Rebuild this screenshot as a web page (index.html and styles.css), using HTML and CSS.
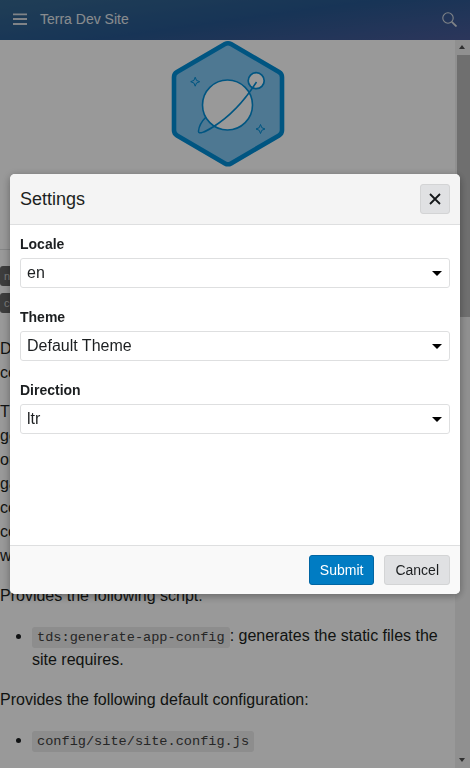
FILE: index.html
```html
<!DOCTYPE html>
<html lang="en">
<head>
    <meta charset="UTF-8">
    <title>Terra Dev Site</title>
    <link rel="stylesheet" href="styles.css">
</head>
<body>
    <header class="app-header">
        <button class="icon-button" aria-label="Menu">
            <svg width="14" height="12" viewBox="0 0 14 12"><path d="M0 1.300h14M0 6h14M0 11h14" fill="none" stroke="#d5dbe2" stroke-width="1.800"/></svg>
        </button>
        <span class="app-title">Terra Dev Site</span>
        <button class="icon-button search-button" aria-label="Search">
            <svg width="15" height="15" viewBox="0 0 15 15" fill="none" stroke="#d5dbe2"><circle cx="6" cy="6" r="5.200" stroke-width="1.100"/><path d="M9.800 9.800l4.700 4.700" stroke-width="1.800"/></svg>
        </button>
    </header>

    <main class="page">
        <div class="content">
            <div class="logo-row">
                <svg class="logo" width="116" height="130" viewBox="0 0 116 130">
                    <path d="M58 3.200a6 6 0 0 1 3 .8l48 28a6 6 0 0 1 3 5.200v53a6 6 0 0 1-3 5.200l-48 28a6 6 0 0 1-6 0l-48-28a6 6 0 0 1-3-5.200v-53a6 6 0 0 1 3-5.200l48-28a6 6 0 0 1 3-.8z" fill="#82c8f4" stroke="#008ed8" stroke-width="4.600"/>
                    <g fill="none" stroke="#008ed8" stroke-width="1.500">
                        <circle cx="57.500" cy="65" r="25" fill="#fff" stroke-width="1.600"/>
                        <circle cx="86.200" cy="40.700" r="8" fill="#fff" stroke-width="1.700"/>
                        <path d="M86.500 42C75 60 59 77 43 87 35 92 28 95 28.500 91 29 86 32 81 36 77"/>
                        <path d="M25.200 37.200l1.300 3.200 3.200 1.300-3.200 1.300-1.300 3.200-1.300-3.200-3.200-1.300 3.200-1.300z" stroke-width="1"/>
                        <path d="M90.500 84.500l1.300 3.200 3.200 1.300-3.200 1.300-1.300 3.200-1.300-3.200-3.200-1.300 3.200-1.300z" stroke-width="1"/>
                    </g>
                </svg>
            </div>
            <hr class="divider">
            <div class="badges">
                <span class="badge">npm</span>
                <span class="badge">coverage</span>
            </div>
            <p class="intro">Dev site is a static site generator for Terra<br>components and documentation.</p>
            <p>The package ships a webpack plugin that<br>generates the pages the site needs,<br>out of the files found in the project,<br>gathers the examples and tests,<br>configures the navigation and the theme,<br>compiles all of that into one bundle,<br>which is then served as a static site.</p>
            <p>Provides the following script:</p>
            <ul>
                <li><code>tds:generate-app-config</code>: generates the static files the site requires.</li>
            </ul>
            <p>Provides the following default configuration:</p>
            <ul>
                <li><code>config/site/site.config.js</code></li>
            </ul>
        </div>
        <div class="scrollbar">
            <span class="scroll-arrow"></span>
            <div class="scroll-track"><div class="scroll-thumb"></div></div>
            <span class="scroll-arrow scroll-arrow-down"></span>
        </div>
    </main>

    <div class="overlay"></div>

    <section class="modal" role="dialog" aria-label="Settings">
        <div class="modal-header">
            <h1 class="modal-title">Settings</h1>
            <button class="btn close-button" aria-label="Close">
                <svg width="12" height="12" viewBox="0 0 12 12"><path d="M1 1l10 10M11 1L1 11" fill="none" stroke="#14171a" stroke-width="1.800"/></svg>
            </button>
        </div>
        <div class="modal-body">
            <div class="field">
                <div class="field-label">Locale</div>
                <div class="select"><span>en</span><i class="caret"></i></div>
            </div>
            <div class="field">
                <div class="field-label">Theme</div>
                <div class="select"><span>Default Theme</span><i class="caret"></i></div>
            </div>
            <div class="field">
                <div class="field-label">Direction</div>
                <div class="select"><span>ltr</span><i class="caret"></i></div>
            </div>
        </div>
        <div class="modal-footer">
            <button class="btn btn-primary">Submit</button>
            <button class="btn">Cancel</button>
        </div>
    </section>
</body>
</html>
```

FILE: styles.css
```css
* {
    box-sizing: border-box;
}

html,
body {
    height: 100%;
}

body {
    margin: 0;
    overflow: hidden;
    display: flex;
    flex-direction: column;
    font-family: "Liberation Sans", Arial, sans-serif;
    font-size: 16px;
    color: #1c1f21;
    background-color: #fff;
}

button {
    font-family: inherit;
}

.app-header {
    flex: none;
    height: 40px;
    display: flex;
    align-items: center;
    padding: 0 13px 2px;
    color: #e4e9ee;
    background: linear-gradient(172deg, #36688f 0%, #27588f 50%, #4a5a98 100%);
}

.icon-button {
    display: flex;
    padding: 0;
    border: none;
    background: none;
}

.app-title {
    margin-left: 13px;
    font-size: 14px;
}

.search-button {
    margin-left: auto;
}

.page {
    flex: 1;
    min-height: 0;
    display: flex;
}

.content {
    flex: 1;
    min-width: 0;
    overflow: hidden;
    line-height: 24px;
}

.logo-row {
    display: flex;
    justify-content: center;
    height: 130px;
}

.divider {
    margin: 79px 0 0;
    border: none;
    border-top: 1px solid #dedfe0;
}

.badges {
    display: flex;
    flex-direction: column;
    align-items: flex-start;
    gap: 7px;
    margin-top: 16px;
}

.badge {
    height: 20px;
    padding: 0 4px;
    border-radius: 3px;
    font-size: 11px;
    line-height: 20px;
    color: #ccc;
    background-color: #666;
}

p {
    margin: 0 0 16px;
}

.intro {
    margin-top: 24px;
    margin-bottom: 15px;
}

ul {
    margin: 0 0 16px;
    padding-left: 32px;
}

code {
    padding: 3px 5px;
    border-radius: 3px;
    font-family: "Liberation Mono", monospace;
    font-size: 13.6px;
    line-height: 1;
    color: #404040;
    background-color: #ebebeb;
}

.scrollbar {
    flex: none;
    width: 15px;
    display: flex;
    flex-direction: column;
    background-color: #f1f1f1;
}

.scroll-arrow {
    flex: none;
    height: 15px;
    position: relative;
}

.scroll-arrow::after {
    content: "";
    position: absolute;
    left: 4px;
    top: 5px;
    border-left: 3.5px solid transparent;
    border-right: 3.5px solid transparent;
    border-bottom: 4px solid #505050;
}

.scroll-arrow-down::after {
    border-bottom: none;
    border-top: 4px solid #505050;
}

.scroll-track {
    flex: 1;
    padding-left: 2px;
}

.scroll-thumb {
    height: 262px;
    background-color: #bababa;
}

.overlay {
    position: fixed;
    inset: 0;
    background-color: rgba(0, 0, 0, 0.4);
}

.modal {
    position: fixed;
    left: 10px;
    top: 174px;
    width: 450px;
    height: 420px;
    display: flex;
    flex-direction: column;
    overflow: hidden;
    border-radius: 5px;
    background-color: #fff;
    box-shadow: 0 2px 8px rgba(0, 0, 0, 0.35);
}

.modal-header {
    flex: none;
    height: 51px;
    display: flex;
    align-items: center;
    justify-content: space-between;
    padding: 0 10px;
    border-bottom: 1px solid #dedfe0;
    background-color: #f4f4f4;
}

.modal-title {
    margin: 0;
    font-size: 18px;
    font-weight: 400;
}

.modal-body {
    flex: 1;
    padding: 10px;
}

.field {
    margin-bottom: 20px;
}

.field-label {
    margin-bottom: 5px;
    font-size: 14px;
    font-weight: 700;
    line-height: 18px;
}

.select {
    height: 30px;
    display: flex;
    align-items: center;
    justify-content: space-between;
    padding: 0 6px;
    border: 1px solid #dedfe0;
    border-radius: 3px;
    font-size: 16px;
}

.caret {
    margin-right: 1px;
    border-left: 5px solid transparent;
    border-right: 5px solid transparent;
    border-top: 5px solid #000;
}

.modal-footer {
    flex: none;
    height: 49px;
    display: flex;
    align-items: center;
    justify-content: flex-end;
    gap: 10px;
    padding: 0 10px;
    border-top: 1px solid #dedfe0;
    background-color: #f9f9f9;
}

.btn {
    height: 30px;
    padding: 0 10px;
    border: 1px solid #d3d4d5;
    border-radius: 3px;
    font-size: 14px;
    color: #1c1f21;
    background-color: #e0e1e3;
}

.btn-primary {
    border-color: #0065a3;
    color: #fff;
    background-color: #007cc3;
}

.close-button {
    width: 30px;
    display: flex;
    align-items: center;
    justify-content: center;
    padding: 0;
}
```
